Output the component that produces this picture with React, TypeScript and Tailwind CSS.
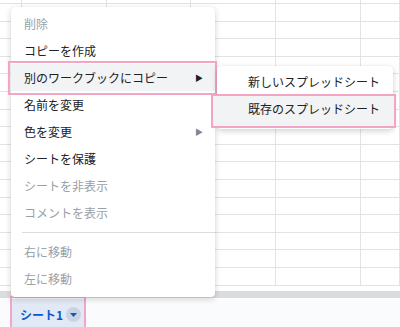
import React from 'react'

const ROWS = 17
const COLS = [22, 85, 84, 85, 85, 39]

interface MenuItem {
  label: string
  disabled?: boolean
  submenu?: boolean
  active?: boolean
}

const topItems: MenuItem[] = [
  { label: '削除', disabled: true },
  { label: 'コピーを作成' },
  { label: '別のワークブックにコピー', submenu: true, active: true },
  { label: '名前を変更' },
  { label: '色を変更', submenu: true },
  { label: 'シートを保護' },
  { label: 'シートを非表示', disabled: true },
  { label: 'コメントを表示', disabled: true },
]

const bottomItems: MenuItem[] = [
  { label: '右に移動', disabled: true },
  { label: '左に移動', disabled: true },
]

function Grid() {
  return (
    <div className="flex flex-col">
      <div className="h-[4px] border-b border-[#e2e3e3] flex">
        {COLS.map((w, i) => (
          <div key={i} style={{ width: w }} className="shrink-0 border-r border-[#e2e3e3]" />
        ))}
      </div>
      {Array.from({ length: ROWS - 1 }).map((_, r) => (
        <div key={r} className="h-[17.6px] border-b border-[#e2e3e3] flex">
          {COLS.map((w, i) => (
            <div key={i} style={{ width: w }} className="shrink-0 border-r border-[#e2e3e3]" />
          ))}
        </div>
      ))}
    </div>
  )
}

function Row({ item }: { item: MenuItem }) {
  return (
    <div
      className={`relative flex h-[27px] items-center pl-[13px] pr-[12px] ${
        item.active ? 'bg-[#f1f3f4]' : ''
      } ${item.disabled ? 'text-[#9aa0a6]' : 'text-[#202124]'}`}
    >
      {item.active && (
        <div className="absolute -left-[3px] -right-[2px] -top-[3px] -bottom-[4px] border-2 border-[#f3a5c5]" />
      )}
      <span className="relative flex-1">{item.label}</span>
      {item.submenu && (
        <span
          className={`relative text-[8px] ${item.active ? 'text-[#202124]' : 'text-[#80868b]'}`}
        >
          ▶
        </span>
      )}
    </div>
  )
}

export default function App() {
  return (
    <div
      className="relative h-[327px] w-[400px] overflow-hidden bg-white text-[12px]"
      style={{ fontFamily: '"Noto Sans CJK JP", "Noto Sans", sans-serif' }}
    >
      <div className="flex h-full flex-col">
        <div className="h-[291px] overflow-hidden">
          <Grid />
        </div>
        <div className="h-[7px] bg-[#dadce0]" />
        <div className="flex flex-1 border-t border-white bg-[#f9fbfd] pl-[12px]">
          <div className="relative flex h-full w-[72px] items-center gap-[3px] bg-[#e1e9f7] pl-[8px] pt-[3px]">
            <div className="absolute -left-[2px] -right-[2px] -top-[3px] -bottom-[2px] border-2 border-[#f3a5c5]" />
            <span className="relative font-bold text-[#0b57d0]">シート1</span>
            <span className="relative flex h-[15px] w-[15px] items-center justify-center rounded-full bg-[#c9d3e2]">
              <svg width="7" height="4" viewBox="0 0 7 4">
                <path d="M0 0 L7 0 L3.5 4 Z" fill="#0b57d0" />
              </svg>
            </span>
          </div>
        </div>
      </div>

      {/* context menu */}
      <div className="absolute left-[11px] top-[7px] w-[204px] rounded-[4px] bg-white pt-[3px] pb-[5px] shadow-[0_2px_6px_rgba(0,0,0,0.18),0_0_1px_rgba(0,0,0,0.1)]">
        {topItems.map((it) => (
          <Row key={it.label} item={it} />
        ))}
        <div className="mt-[6px] mb-[5px] ml-[11px] h-px bg-[#dadce0]" />
        {bottomItems.map((it) => (
          <Row key={it.label} item={it} />
        ))}
      </div>

      {/* submenu */}
      <div className="absolute left-[217px] top-[66px] w-[176px] rounded-[4px] bg-white pt-[2.5px] pb-[6px] shadow-[0_2px_6px_rgba(0,0,0,0.18),0_0_1px_rgba(0,0,0,0.1)]">
        <div className="flex h-[27px] items-center pl-[31px] text-[#202124]">新しいスプレッドシート</div>
        <div className="relative flex h-[27px] items-center pl-[31px] text-[#202124]">
          <div className="absolute -left-[6px] -right-[3px] -top-[1.5px] -bottom-[5.5px] border-2 border-[#f3a5c5] bg-[#f1f3f4]" />
          <span className="relative">既存のスプレッドシート</span>
        </div>
      </div>
    </div>
  )
}
